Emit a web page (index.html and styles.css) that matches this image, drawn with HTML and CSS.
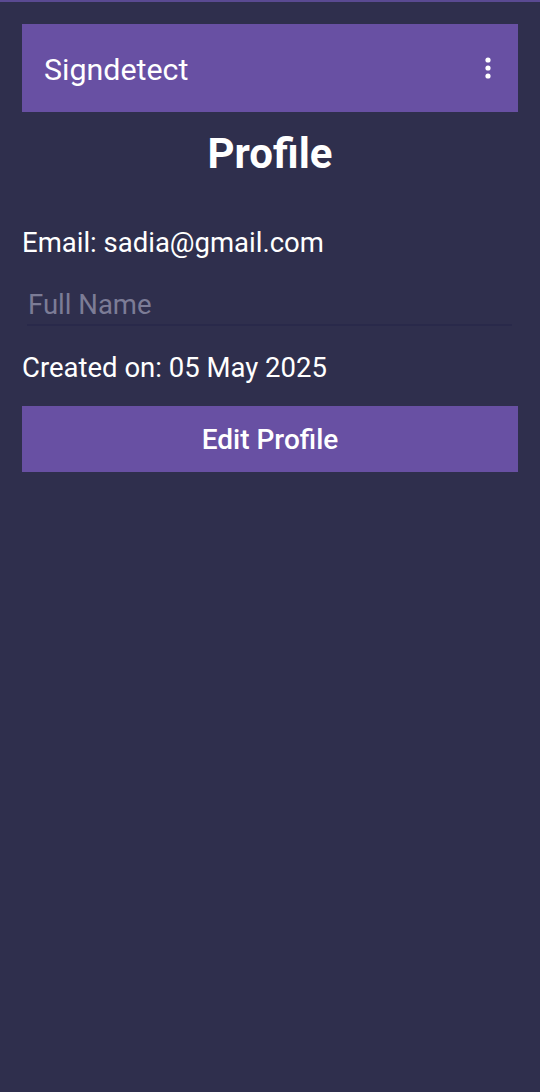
FILE: index.html
```html
<!DOCTYPE html>
<html>
<head>
<meta charset="utf-8">
<link rel="stylesheet" href="styles.css">
</head>
<body>
<div class="status-line"></div>
<main class="screen">
  <header class="toolbar">
    <span class="toolbar-title">Signdetect</span>
    <svg class="menu-icon" width="6" height="22" viewBox="0 0 6 22" aria-hidden="true">
      <circle cx="3" cy="3" r="2.6" fill="#ffffff"/>
      <circle cx="3" cy="11" r="2.6" fill="#ffffff"/>
      <circle cx="3" cy="19" r="2.6" fill="#ffffff"/>
    </svg>
  </header>
  <h1 class="heading">Profile</h1>
  <p class="info email">Email: sadia@gmail.com</p>
  <div class="field">
    <input class="field-input" type="text" placeholder="Full Name">
  </div>
  <p class="info created">Created on: 05 May 2025</p>
  <button class="btn">Edit Profile</button>
</main>
</body>
</html>
```

FILE: styles.css
```css
html, body {
  margin: 0;
  padding: 0;
  background: #2f2f4d;
  height: 100%;
}
body {
  font-family: Roboto, "Noto Sans", "Liberation Sans", sans-serif;
  color: #ffffff;
}
.status-line {
  height: 2px;
  background: #5a4a92;
}
.screen {
  padding: 0 22px;
  display: flex;
  flex-direction: column;
}
.toolbar {
  margin-top: 22px;
  height: 88px;
  background: #6850a3;
  display: flex;
  align-items: center;
  justify-content: space-between;
  padding: 0 27px 0 22px;
}
.toolbar-title {
  font-size: 30.4px;
  line-height: 36px;
  padding-top: 4px;
  color: #ffffff;
}
.menu-icon {
  display: block;
}
.heading {
  margin: 17px 0 0;
  font-size: 42px;
  line-height: 50px;
  font-weight: 700;
  text-align: center;
}
.info {
  margin: 0;
  font-size: 27.5px;
  line-height: 32px;
}
.email {
  margin-top: 48px;
}
.field {
  margin: 30px 6px 0 5px;
  border-bottom: 2px solid #29294a;
  padding-bottom: 3px;
}
.field-input {
  display: block;
  width: 100%;
  box-sizing: border-box;
  border: 0;
  outline: 0;
  background: transparent;
  padding: 0 0 0 1px;
  margin: 0;
  font-family: inherit;
  font-size: 27.5px;
  line-height: 32px;
  height: 32px;
  color: #ffffff;
}
.field-input::placeholder {
  color: #7c7c96;
  opacity: 1;
}
.created {
  margin-top: 26px;
}
.btn {
  margin-top: 22px;
  height: 66px;
  border: 0;
  background: #6850a3;
  color: #ffffff;
  font-family: inherit;
  font-size: 28px;
  font-weight: 500;
  padding: 0;
  cursor: pointer;
}
```
